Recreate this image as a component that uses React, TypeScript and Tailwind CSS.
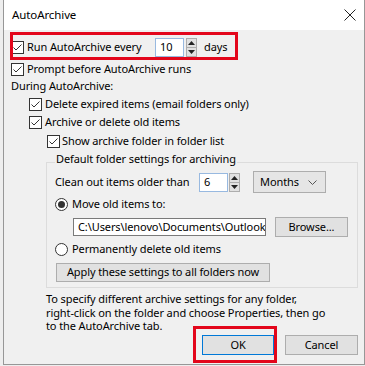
import type { ReactNode } from 'react'

function Check({ checked = true }: { checked?: boolean }) {
  return (
    <span className="w-[13px] h-[13px] shrink-0 border border-[#333333] bg-white flex items-center justify-center">
      {checked && (
        <svg width="11" height="11" viewBox="0 0 11 11">
          <path d="M1.5 5.5 L4 8 L9.5 2.5" fill="none" stroke="#333333" strokeWidth="1" />
        </svg>
      )}
    </span>
  )
}

function Radio({ checked = false }: { checked?: boolean }) {
  return (
    <span className="w-[13px] h-[13px] shrink-0 rounded-full border border-[#333333] bg-white flex items-center justify-center">
      {checked && <span className="w-[7px] h-[7px] rounded-full bg-[#333333]" />}
    </span>
  )
}

function Spin() {
  return (
    <span className="w-[11px] h-[19px] shrink-0 flex flex-col border border-[#adadad] bg-[#e1e1e1]">
      <span className="flex-1 flex items-center justify-center border-b border-[#adadad]">
        <svg width="7" height="4" viewBox="0 0 7 4">
          <path d="M0 4 L3.5 0 L7 4 Z" fill="#222222" />
        </svg>
      </span>
      <span className="flex-1 flex items-center justify-center">
        <svg width="7" height="4" viewBox="0 0 7 4">
          <path d="M0 0 L3.5 4 L7 0 Z" fill="#222222" />
        </svg>
      </span>
    </span>
  )
}

function Row({ className, children }: { className: string; children: ReactNode }) {
  return <div className={'flex items-center h-[16px] ' + className}>{children}</div>
}

export default function App() {
  return (
    <div className="w-[365px] h-[366px] flex bg-[#eeeeee] font-['Noto_Sans',sans-serif] text-[11px] tracking-[-0.1px] text-black overflow-hidden whitespace-nowrap">
      <div className="w-[3px] shrink-0" />
      <div className="relative w-[362px] h-[365px] border-x border-b border-[#979797] flex flex-col">
        {/* Title bar */}
        <div className="h-[30px] shrink-0 bg-white flex items-center justify-between pl-[8px] pr-[8px]">
          <span className="text-[11.5px]">AutoArchive</span>
          <svg width="12" height="12" viewBox="0 0 12 12">
            <path d="M0.5 0.5 L11.5 11.5 M11.5 0.5 L0.5 11.5" stroke="#222222" strokeWidth="1" />
          </svg>
        </div>

        {/* Body */}
        <div className="flex-1 bg-[#f0f0f0] flex flex-col pl-[7px] pr-[6px]">
          <div className="flex items-center h-[20px] mt-[7px]">
            <Check />
            <span className="ml-[3px] w-[128px]">Run AutoArchive every</span>
            <span className="w-[29px] h-[19px] border border-[#98b9e0] bg-white flex items-center pl-[4px]">10</span>
            <span className="ml-[2px]"><Spin /></span>
            <span className="ml-[7px]">days</span>
          </div>

          <Row className="mt-[4px]">
            <Check />
            <span className="ml-[3px]">Prompt before AutoArchive runs</span>
          </Row>
          <Row className="mt-[1px]">
            <span>During AutoArchive:</span>
          </Row>
          <Row className="mt-[2px] pl-[18px]">
            <Check />
            <span className="ml-[3px]">Delete expired items (email folders only)</span>
          </Row>
          <Row className="mt-[2px] pl-[18px]">
            <Check />
            <span className="ml-[3px]">Archive or delete old items</span>
          </Row>
          <Row className="mt-[3px] pl-[36px]">
            <Check />
            <span className="ml-[2px]">Show archive folder in folder list</span>
          </Row>

          {/* Group box */}
          <div className="ml-[35px] mt-[13px] border border-[#dcdcdc] flex flex-col pl-[8px] pb-[5px]">
            <div className="h-[16px] -mt-[12px] flex items-center">
              <span className="bg-[#f0f0f0] px-[1px]">Default folder settings for archiving</span>
            </div>
            <div className="flex items-center h-[22px] mt-[4px]">
              <span className="w-[144px]">Clean out items older than</span>
              <span className="w-[29px] h-[19px] border border-[#98b9e0] bg-white flex items-center pl-[4px]">6</span>
              <span className="ml-[1px]"><Spin /></span>
              <span className="ml-[13px] w-[73px] h-[22px] border border-[#adadad] bg-[#e5e5e5] flex items-center justify-between pl-[6px] pr-[8px]">
                Months
                <svg width="9" height="5" viewBox="0 0 9 5">
                  <path d="M0.5 0.5 L4.5 4.5 L8.5 0.5" fill="none" stroke="#555555" strokeWidth="1" />
                </svg>
              </span>
            </div>
            <Row className="mt-[3px]">
              <Radio checked />
              <span className="ml-[4px]">Move old items to:</span>
            </Row>
            <div className="flex items-center h-[20px] mt-[5px] pl-[18px]">
              <span className="w-[193px] h-[18px] border border-[#7a7a7a] bg-white flex items-center pl-[4px] overflow-hidden">
                <span className="w-[187px] overflow-hidden">C:\Users\lenovo\Documents\Outlook</span>
              </span>
              <span className="ml-[9px] w-[73px] h-[20px] border border-[#adadad] bg-[#e1e1e1] flex items-center justify-center">
                Browse...
              </span>
            </div>
            <Row className="mt-[4px]">
              <Radio />
              <span className="ml-[4px]">Permanently delete old items</span>
            </Row>
            <div className="flex mt-[6px]">
              <span className="ml-[1px] w-[214px] h-[19px] border border-[#adadad] bg-[#e1e1e1] flex items-center justify-center">
                Apply these settings to all folders now
              </span>
            </div>
          </div>

          {/* Info text */}
          <div className="ml-[35px] mt-[4px] leading-[13.5px] h-[40.5px]">
            <div>To specify different archive settings for any folder,</div>
            <div>right-click on the folder and choose Properties, then go</div>
            <div>to the AutoArchive tab.</div>
          </div>

          <div className="flex justify-end gap-[11px] mt-[2.5px]">
            <span className="w-[72px] h-[20px] border border-[#0078d7] bg-[#e1e1e1] flex items-center justify-center">OK</span>
            <span className="w-[73px] h-[20px] border border-[#adadad] bg-[#e1e1e1] flex items-center justify-center">Cancel</span>
          </div>
        </div>

        {/* Red highlight boxes */}
        <div className="absolute left-[6px] top-[32px] w-[228px] h-[28px] border-[3px] border-[#e3061b] pointer-events-none" />
        <div className="absolute left-[189px] top-[326px] w-[84px] h-[37px] border-[3px] border-[#e3061b] pointer-events-none" />
      </div>
    </div>
  )
}
